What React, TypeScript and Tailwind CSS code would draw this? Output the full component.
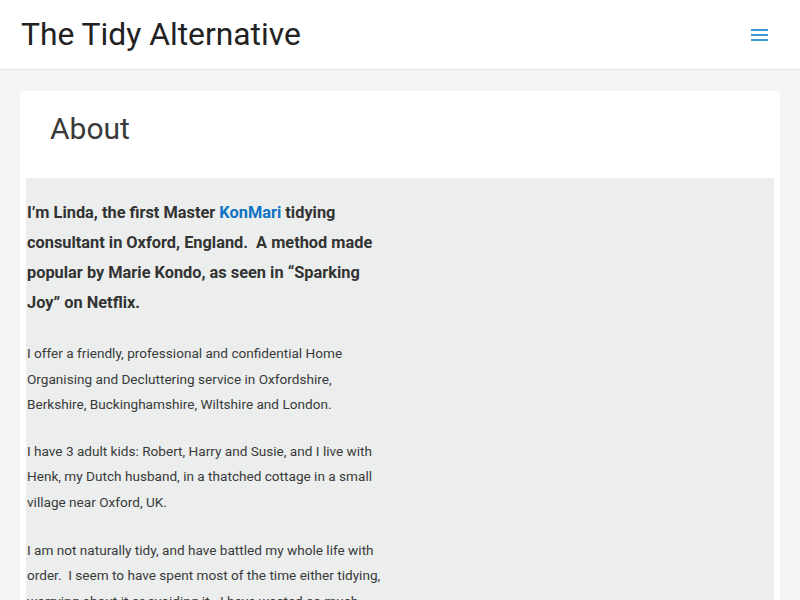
import React from "react";

const paragraphs = [
  "I offer a friendly, professional and confidential Home Organising and Decluttering service in Oxfordshire, Berkshire, Buckinghamshire, Wiltshire and London.",
  "I have 3 adult kids: Robert, Harry and Susie, and I live with Henk, my Dutch husband, in a thatched cottage in a small village near Oxford, UK.",
  "I am not naturally tidy, and have battled my whole life with order.\u00a0 I seem to have spent most of the time either tidying, worrying about it or avoiding it.\u00a0 I have wasted so much time looking for things.",
];

const App = () => {
  return (
    <div
      className="min-h-screen bg-[#f4f4f4] text-[#3a3a3a]"
      style={{ fontFamily: "Roboto, 'Liberation Sans', sans-serif" }}
    >
      <header className="h-[70px] bg-white border-b border-[#e6e6e6] flex items-center justify-between pl-[21px] pr-[32px]">
        <a href="#" className="text-[31.8px] leading-none text-[#222]">
          The Tidy Alternative
        </a>
        <button className="flex flex-col gap-[3px] w-[17px]" aria-label="Menu">
          <span className="block h-[2px] w-full bg-[#3a98d6]" />
          <span className="block h-[2px] w-full bg-[#3a98d6]" />
          <span className="block h-[2px] w-full bg-[#3a98d6]" />
        </button>
      </header>

      <main className="px-[20px] pt-[21px]">
        <article className="bg-white px-[6px]">
          <h1 className="text-[30px] leading-none font-normal text-[#3a3a3a] pl-[24px] pt-[23px] pb-[34px]">
            About
          </h1>
          <div className="bg-[#ebeeed] pt-[20px] pb-[20px] px-[1px]">
            <div className="w-[360px]">
              <p className="text-[16.35px] leading-[30px] font-bold text-[#333]">
                I’m Linda, the first Master{" "}
                <a href="#" className="text-[#0f74c4]">
                  KonMari
                </a>{" "}
                tidying consultant in Oxford, England.&nbsp; A method made
                popular by Marie Kondo, as seen in “Sparking Joy” on Netflix.
              </p>
              {paragraphs.map((text, i) => (
                <p
                  key={i}
                  className={`text-[13.6px] leading-[25.6px] text-[#3a3a3a] ${
                    i === 0 ? "mt-[23px]" : i === 2 ? "mt-[22px]" : "mt-[21px]"
                  }`}
                >
                  {text}
                </p>
              ))}
            </div>
          </div>
        </article>
      </main>
    </div>
  );
};

export default App;
